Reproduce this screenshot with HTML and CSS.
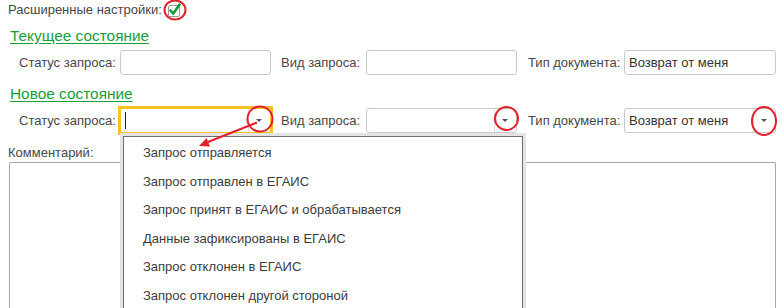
FILE: index.html
```html
<!DOCTYPE html>
<html lang="ru">

<head>
    <meta charset="UTF-8">
    <meta name="viewport" content="width=device-width, initial-scale=1.0">
    <title>Статус запроса</title>
    <link rel="stylesheet" href="styles.css">
</head>

<body>
    <div class="form">
        <div class="adv">
            <span>Расширенные настройки:</span>
            <span class="check">
                <svg width="16" height="16" viewBox="0 0 16 16">
                    <rect x="2.5" y="3.5" width="11" height="11" rx="1.5" fill="#fff" stroke="#9a9a9a" />
                    <path d="M4.5 8.5 L7.3 11.6 L13.6 2.6" fill="none" stroke="#159b3a" stroke-width="2.6" stroke-linecap="round" stroke-linejoin="round" />
                </svg>
            </span>
        </div>

        <div class="group-title">Текущее состояние</div>
        <div class="row">
            <div class="lbl lbl-status">Статус запроса:</div>
            <div class="field"></div>
            <div class="lbl lbl-kind">Вид запроса:</div>
            <div class="field"></div>
            <div class="lbl lbl-type">Тип документа:</div>
            <div class="field field-type"><span class="value">Возврат от меня</span></div>
        </div>

        <div class="group-title second">Новое состояние</div>
        <div class="row">
            <div class="lbl lbl-status">Статус запроса:</div>
            <div class="field dd focused">
                <span class="value"><span class="caret"></span></span>
                <span class="dd-btn"></span>
            </div>
            <div class="lbl lbl-kind">Вид запроса:</div>
            <div class="field dd">
                <span class="value"></span>
                <span class="dd-btn"></span>
            </div>
            <div class="lbl lbl-type">Тип документа:</div>
            <div class="field field-type dd">
                <span class="value">Возврат от меня</span>
                <span class="dd-btn"></span>
            </div>
        </div>

        <div class="comment-lbl">Комментарий:</div>
        <div class="comment"></div>
    </div>

    <div class="popup">
        <div class="opt">Запрос отправляется</div>
        <div class="opt">Запрос отправлен в ЕГАИС</div>
        <div class="opt">Запрос принят в ЕГАИС и обрабатывается</div>
        <div class="opt">Данные зафиксированы в ЕГАИС</div>
        <div class="opt">Запрос отклонен в ЕГАИС</div>
        <div class="opt">Запрос отклонен другой стороной</div>
    </div>

    <!-- красные пометки поверх формы -->
    <svg class="marks" width="784" height="308" viewBox="0 0 784 308">
        <g fill="none" stroke="#e4202a" stroke-width="2">
            <ellipse cx="175" cy="10" rx="10.5" ry="9.5" />
            <ellipse cx="260" cy="119" rx="12.5" ry="12.5" />
            <ellipse cx="506.5" cy="118.5" rx="11.5" ry="11.5" />
            <ellipse cx="764" cy="121" rx="12" ry="14" />
            <line x1="257" y1="122.5" x2="208" y2="142" />
        </g>
        <polygon points="199,146 210,146.4 206.6,138.1" fill="#e4202a" />
    </svg>
</body>

</html>
```

FILE: styles.css
```css
body {
    margin: 0;
    font-family: "Liberation Sans", Arial, sans-serif;
    font-size: 13px;
    color: #474747;
    background: #fff;
    overflow: hidden;
}

.form {
    width: 784px;
    height: 308px;
    overflow: hidden;
}

.adv {
    display: flex;
    align-items: center;
    height: 16px;
    line-height: 16px;
    padding: 2px 8px;
}

.adv .check {
    display: inline-flex;
    margin-left: 4px;
    margin-top: -1px;
}

.group-title {
    margin: 7px 0 0 10px;
    font-size: 15.4px;
    line-height: 18px;
    color: #16a03b;
    text-decoration: underline;
    text-underline-offset: 2px;
}

.group-title.second {
    margin-top: 10px;
}

.row {
    display: flex;
    align-items: center;
    margin-top: 5px;
    padding-left: 19px;
    height: 25px;
}

.lbl {
    line-height: 16px;
    white-space: nowrap;
}

.lbl-status {
    width: 101px;
}

.lbl-kind {
    width: 85px;
    margin-left: 10px;
}

.lbl-type {
    width: 96px;
    margin-left: 11px;
}

.field {
    box-sizing: border-box;
    display: flex;
    align-items: stretch;
    width: 151px;
    height: 25px;
    border: 1px solid #c9c9c9;
    border-radius: 3px;
    background: #fff;
}

.field-type {
    width: 152px;
}

.field .value {
    flex: 1;
    display: flex;
    align-items: center;
    padding-left: 4px;
    color: #333;
    white-space: nowrap;
    overflow: hidden;
}

.field.focused {
    border: 2px solid #f6c224;
    box-shadow: 0 0 0 1px #f6c224;
    border-radius: 0;
    height: 27px;
    margin: 0 -1px;
    width: 153px;
}

.caret {
    display: block;
    width: 1px;
    height: 17px;
    background: #222;
}

.dd-btn {
    position: relative;
    width: 21px;
    border-left: 1px solid #dcdcdc;
}

.dd-btn::after {
    content: "";
    position: absolute;
    left: 7px;
    top: 10px;
    border-left: 3px solid transparent;
    border-right: 3px solid transparent;
    border-top: 3px solid #555;
}

.comment-lbl {
    margin: 12px 0 0 8px;
    line-height: 16px;
}

.comment {
    box-sizing: border-box;
    margin: 1px 0 0 9px;
    width: 767px;
    height: 146px;
    border: 1px solid #a6a6a6;
    border-bottom: 0;
    border-radius: 2px 2px 0 0;
}

.popup {
    position: absolute;
    left: 123px;
    top: 136px;
    box-sizing: border-box;
    width: 400px;
    height: 172px;
    padding-top: 2px;
    border: 1px solid #707070;
    border-bottom: 0;
    box-shadow: 0 0 0 3px #e4e4e4;
    background: #fff;
}

.popup .opt {
    height: 28.6px;
    line-height: 28.6px;
    padding-left: 19px;
    color: #3c3c3c;
    white-space: nowrap;
}

.marks {
    position: absolute;
    left: 0;
    top: 0;
    pointer-events: none;
}
```
